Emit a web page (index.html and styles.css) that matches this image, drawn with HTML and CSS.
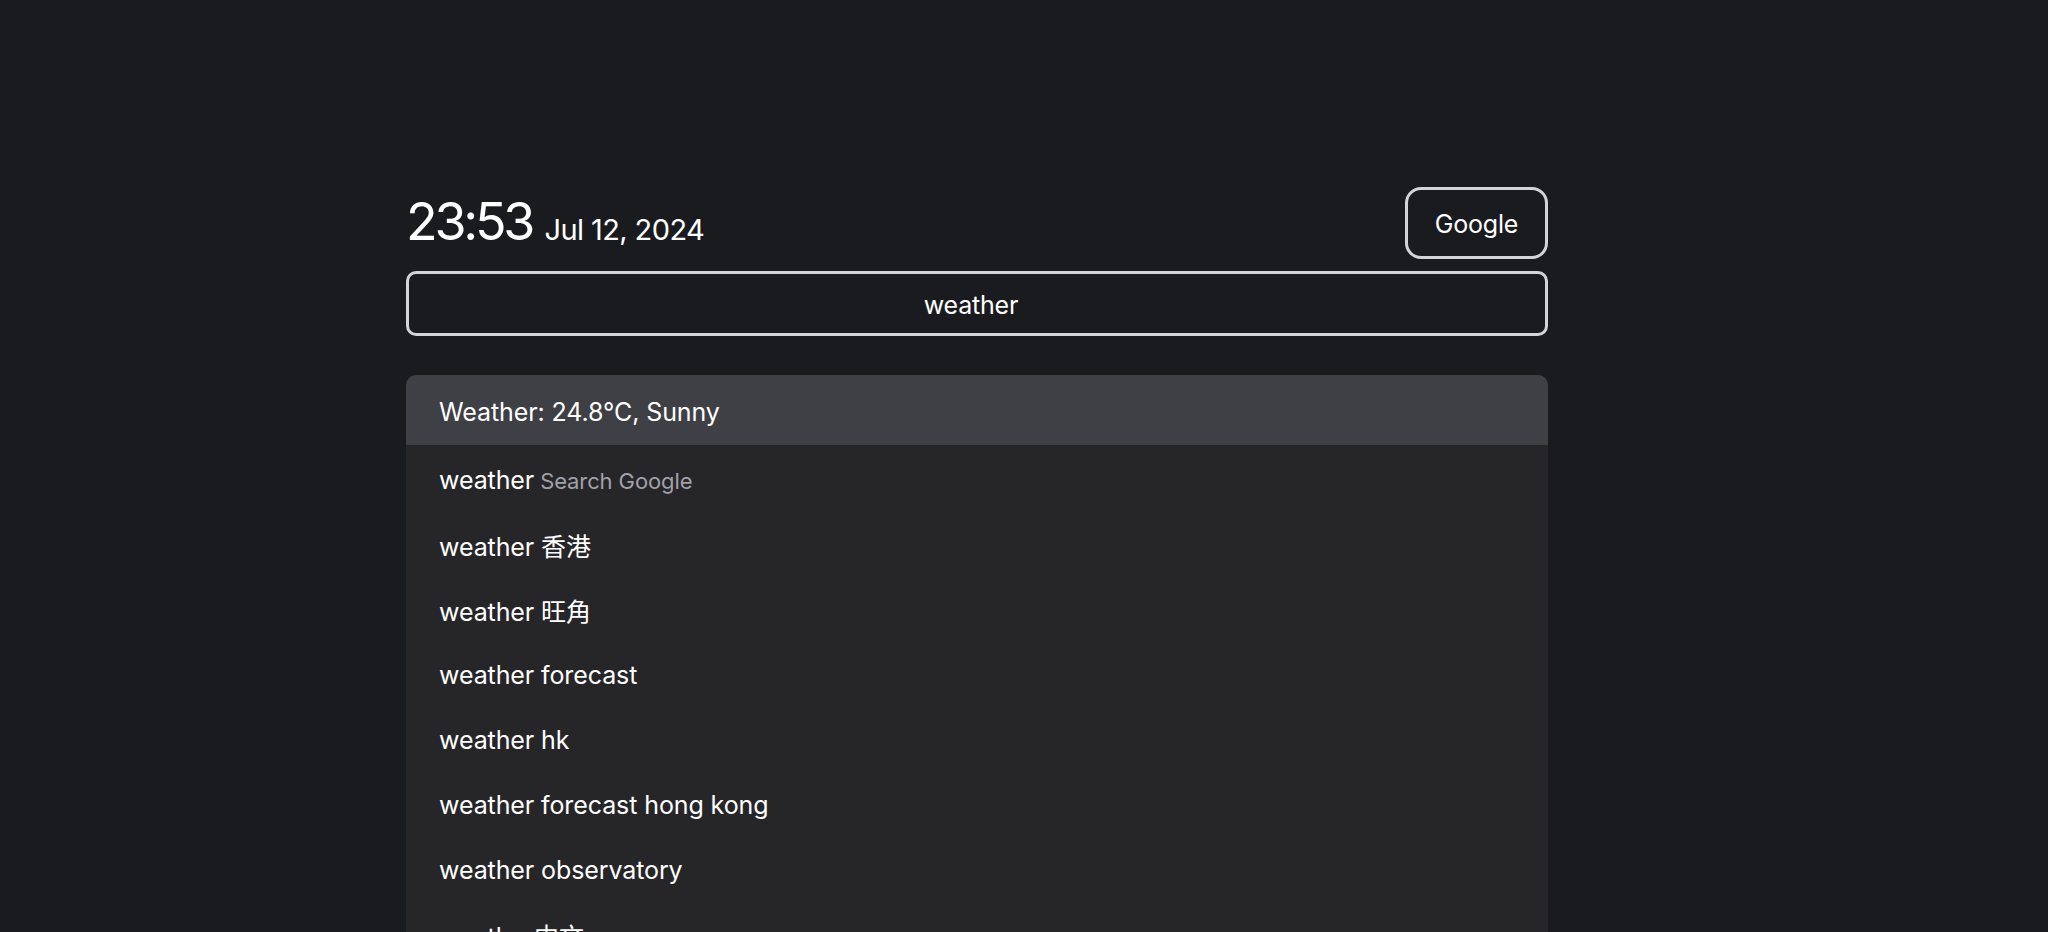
FILE: index.html
```html
<!DOCTYPE html>
<html lang="en">
<head>
<meta charset="utf-8">
<title>Start</title>
<link rel="stylesheet" href="styles.css">
</head>
<body>
<main class="page">
  <header class="top">
    <div class="clock">
      <span class="time">23:53</span>
      <span class="date">Jul 12, 2024</span>
    </div>
    <button class="engine">Google</button>
  </header>
  <div class="search">weather</div>
  <ul class="results">
    <li class="row first">Weather: 24.8°C, Sunny</li>
    <li class="row">weather <span class="hint">Search Google</span></li>
    <li class="row">weather 香港</li>
    <li class="row">weather 旺角</li>
    <li class="row">weather forecast</li>
    <li class="row">weather hk</li>
    <li class="row">weather forecast hong kong</li>
    <li class="row">weather observatory</li>
    <li class="row">weather中文</li>
  </ul>
</main>
</body>
</html>
```
FILE: styles.css
```css
html, body {
  margin: 0;
  padding: 0;
  background: #1a1b1f;
  height: 100%;
  overflow: hidden;
}
body {
  font-family: Inter, "Noto Sans CJK TC", sans-serif;
  color: #ffffff;
}
.page {
  width: 1142px;
  margin-left: 406px;
  padding-top: 187px;
}
.top {
  display: flex;
  justify-content: space-between;
  align-items: flex-end;
}
.clock {
  line-height: 1;
  margin-bottom: 11px;
  margin-left: 0;
}
.time {
  font-size: 52px;
  letter-spacing: -3.3px;
}
.date {
  font-size: 29px;
  letter-spacing: -0.6px;
  margin-left: 8px;
}
.engine {
  width: 143px;
  height: 72px;
  border: 3px solid #d4d4d8;
  border-radius: 16px;
  background: transparent;
  color: #fff;
  font-family: Inter, sans-serif;
  font-size: 25px;
  letter-spacing: -0.2px;
  padding: 2px 0 0;
}
.search {
  margin-top: 12px;
  height: 65px;
  box-sizing: border-box;
  border: 3px solid #d4d4d8;
  border-radius: 10px;
  display: flex;
  align-items: center;
  justify-content: center;
  font-size: 25px;
  letter-spacing: -0.2px;
  padding-right: 12px;
  padding-top: 2px;
}
.results {
  list-style: none;
  margin: 39px 0 0;
  padding: 0;
  background: #262629;
  border-radius: 10px;
  overflow: hidden;
}
.row {
  height: 65px;
  box-sizing: border-box;
  display: flex;
  align-items: center;
  padding-left: 33px;
  padding-top: 4px;
  font-size: 25px;
  letter-spacing: -0.1px;
}
.row.first {
  height: 70px;
  padding-top: 3px;
  background: #3f4046;
}
.hint {
  color: #a1a1aa;
  font-size: 22px;
  margin-left: 6px;
  padding-top: 3px;
}
```
